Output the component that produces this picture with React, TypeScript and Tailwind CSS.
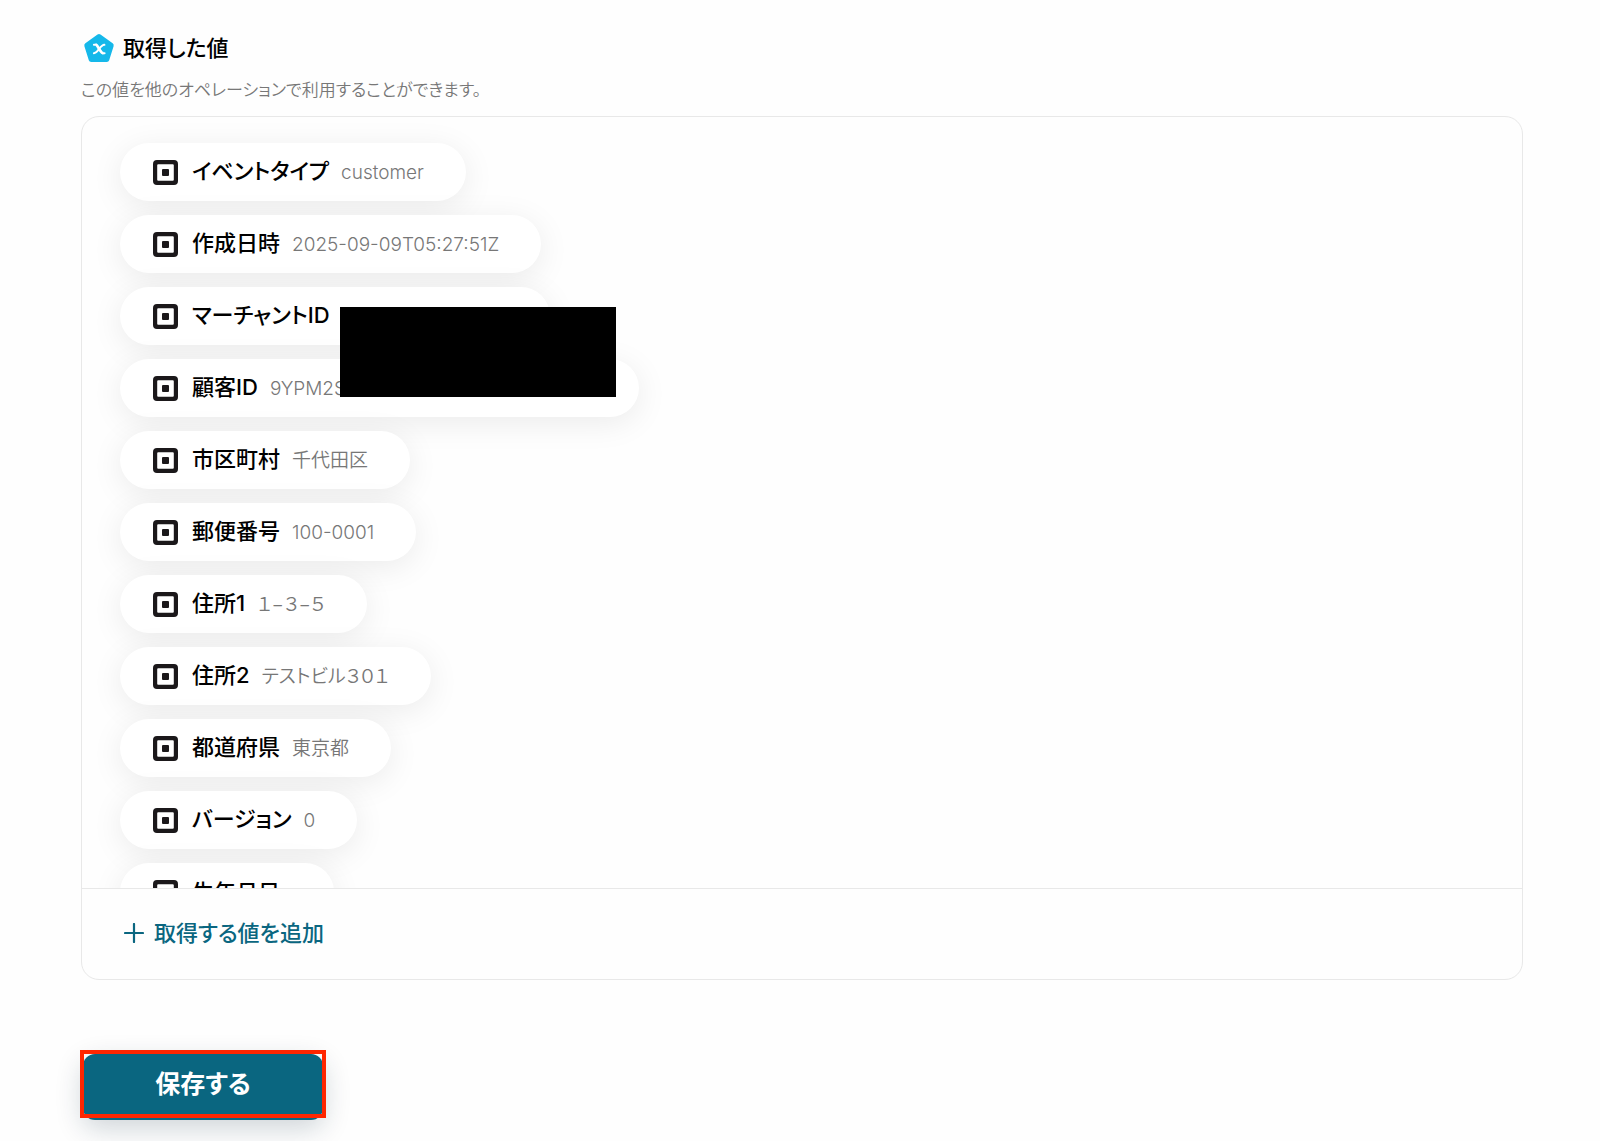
import React from "react";

interface ValueItem {
  label: string;
  value?: string;
}

const items: ValueItem[] = [
  { label: "イベントタイプ", value: "customer" },
  { label: "作成日時", value: "2025-09-09T05:27:51Z" },
  { label: "マーチャントID", value: "MLXXXXXXXXXXX" },
  { label: "顧客ID", value: "9YPM2SXXXXXXXXXXXXXXXXXXXX" },
  { label: "市区町村", value: "千代田区" },
  { label: "郵便番号", value: "100-0001" },
  { label: "住所1", value: "１−３−５" },
  { label: "住所2", value: "テストビル３０１" },
  { label: "都道府県", value: "東京都" },
  { label: "バージョン", value: "0" },
  { label: "生年月日" },
];

const PentagonIcon = () => (
  <svg className="w-8 h-8 shrink-0" viewBox="0 0 32 32" fill="none" aria-hidden="true">
    <path
      d="M16 4.6 L28.2 13.4 L23.8 27.6 H8.2 L3.8 13.4 Z"
      fill="#15b8ea"
      stroke="#15b8ea"
      strokeWidth="5"
      strokeLinejoin="round"
    />
    <path d="M12.6 12.6 C15 12.6 17 21.2 20.4 21.2" stroke="#fff" strokeWidth="2.8" />
    <path
      d="M10.9 12.8 H13 M19.6 21.2 H21.6 M21.4 12.8 C17.6 12.4 14.8 21.4 10.9 21.2"
      stroke="#fff"
      strokeWidth="2"
      strokeLinecap="round"
    />
  </svg>
);

const SquareIcon = () => (
  <svg className="w-[25px] h-[25px] shrink-0" viewBox="0 0 25 25" aria-hidden="true">
    <path
      d="M4 0H21A4 4 0 0 1 25 4V21A4 4 0 0 1 21 25H4A4 4 0 0 1 0 21V4A4 4 0 0 1 4 0ZM5.2 4.2A1 1 0 0 0 4.2 5.2V19.8A1 1 0 0 0 5.2 20.8H19.8A1 1 0 0 0 20.8 19.8V5.2A1 1 0 0 0 19.8 4.2Z"
      fill="#1b181a"
      fillRule="evenodd"
    />
    <rect x="9" y="9" width="7" height="7" rx="1" fill="#1b181a" />
  </svg>
);

const PlusIcon = () => (
  <svg className="w-5 h-5 shrink-0" viewBox="0 0 20 20" aria-hidden="true">
    <path d="M10 1V19M1 10H19" stroke="#0a6680" strokeWidth="2.2" strokeLinecap="round" />
  </svg>
);

const ValuePill = ({ label, value }: ValueItem) => (
  <li className="flex items-center shrink-0 h-[58px] pl-[33px] pr-[42px] rounded-full bg-white shadow-[0_6px_32px_rgba(0,0,0,0.08)]">
    <SquareIcon />
    <div className="flex items-baseline gap-3 ml-3.5 leading-8">
      <span className="text-[22px] font-medium text-black">{label}</span>
      <span className="text-[19px] font-[350] text-[#777]">{value}</span>
    </div>
  </li>
);

const App = () => {
  return (
    <main className="min-h-screen bg-[#fefefe] pl-[81px] pr-[77px] pt-8 pb-4 font-['Inter','Noto_Sans_CJK_JP',sans-serif] [font-feature-settings:'palt'] whitespace-nowrap">
      {/* Heading */}
      <div className="flex items-center gap-2 pl-0.5">
        <PentagonIcon />
        <h2 className="text-[22px] leading-8 font-medium text-black">取得した値</h2>
      </div>
      <p className="mt-3 text-[17px] leading-7 font-[350] text-[#777]">
        この値を他のオペレーションで利用することができます。
      </p>

      {/* Values */}
      <section className="relative mt-3 border border-[#e8e8e8] rounded-[18px]">
        <ul className="flex flex-col items-start gap-3.5 max-h-[771px] overflow-hidden pl-[38px] pt-[26px]">
          {items.map((item) => (
            <ValuePill key={item.label} {...item} />
          ))}
        </ul>
        <div className="absolute left-[258px] top-[190px] w-[276px] h-[90px] bg-black" />
        <div className="border-t border-[#e8e8e8] px-[42px] pt-7 pb-[30px]">
          <button
            type="button"
            className="flex items-center gap-2.5 text-[22px] leading-8 font-medium text-[#0a6680] cursor-pointer"
          >
            <PlusIcon />
            取得する値を追加
          </button>
        </div>
      </section>

      {/* Save */}
      <div className="relative w-fit mt-[74px] ml-0.5">
        <button
          type="button"
          className="block w-60 h-[66px] pb-1 rounded-[12px] bg-[#0a6680] text-[25px] font-semibold text-white shadow-[0_8px_28px_rgba(10,40,60,0.2)] cursor-pointer"
        >
          保存する
        </button>
        <div className="absolute -inset-x-[3px] -top-1 bottom-0.5 border-4 border-[#ff2600] pointer-events-none" />
      </div>
    </main>
  );
};

export default App;
